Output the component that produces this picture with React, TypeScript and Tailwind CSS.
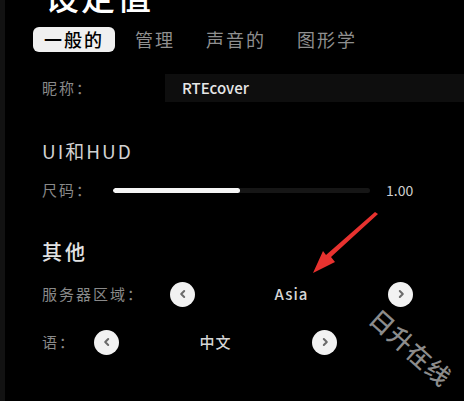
import React from 'react'

const font = { fontFamily: '"Noto Sans CJK SC", "Noto Sans", sans-serif' }

function RoundArrow({ dir }: { dir: 'left' | 'right' }) {
  return (
    <div className="flex h-[25px] w-[25px] shrink-0 items-center justify-center rounded-full bg-[#f2f2f2]">
      <svg width="10" height="10" viewBox="0 0 10 10">
        <path
          d={dir === 'left' ? 'M6.2 2 L3.2 5 L6.2 8' : 'M3.8 2 L6.8 5 L3.8 8'}
          fill="none"
          stroke="#6b6b6b"
          strokeWidth="2"
          strokeLinecap="round"
          strokeLinejoin="round"
        />
      </svg>
    </div>
  )
}

function Picker({ value }: { value: string }) {
  return (
    <div className="flex w-[243px] items-center justify-between">
      <RoundArrow dir="left" />
      <span className="text-[15px] font-medium tracking-[1px] text-[#d6d6d6]">{value}</span>
      <RoundArrow dir="right" />
    </div>
  )
}

export default function App() {
  const tabs = ['一般的', '管理', '声音的', '图形学']

  return (
    <div
      style={font}
      className="relative h-[401px] w-[464px] overflow-hidden border-l-[5px] border-[#121212] bg-black"
    >
      {/* cut-off title */}
      <div className="h-[16px] overflow-hidden pl-[40px]">
        <div className="-mt-[21px] text-[34px] font-medium leading-none tracking-[2px] text-white">
          设定值
        </div>
      </div>

      {/* tabs */}
      <div className="mt-[11px] flex h-[25px] items-center gap-[9px] pl-[28px]">
        {tabs.map((t, i) => (
          <div
            key={t}
            className={
              i === 0
                ? 'flex h-[25px] items-center rounded-[6px] bg-[#f0f0f0] px-[11px] text-[18px] font-medium tracking-[2px] text-black'
                : 'flex h-[25px] items-center px-[11px] text-[18px] tracking-[2px] text-[#8f8f8f]'
            }
          >
            {t}
          </div>
        ))}
      </div>

      {/* nickname */}
      <div className="mt-[22px] flex h-[28px] items-center pl-[37px]">
        <span className="w-[123px] text-[15px] tracking-[2px] text-[#8a8a8a]">昵称：</span>
        <div className="flex h-[28px] flex-1 items-center bg-[#0e0e0e] pl-[17px] text-[15px] font-medium text-[#e6e6e6]">
          RTEcover
        </div>
      </div>

      {/* UI and HUD */}
      <div className="mt-[37px] flex h-[24px] items-center pl-[37px] text-[19px] tracking-[2px] text-[#d2d2d2]">
        UI和HUD
      </div>

      <div className="mt-[17px] flex h-[20px] items-center pl-[37px]">
        <span className="w-[71px] text-[15px] tracking-[2px] text-[#8a8a8a]">尺码：</span>
        <div className="flex h-[5px] w-[257px] overflow-hidden rounded-full bg-[#161616]">
          <div className="h-full w-[127px] rounded-full bg-[#f5f5f5]" />
        </div>
        <span className="ml-[16px] text-[14px] text-[#cfcfcf]">1.00</span>
      </div>

      {/* other */}
      <div className="mt-[39px] flex h-[26px] items-center pl-[37px] text-[20px] font-medium tracking-[3px] text-[#e2e2e2]">
        其他
      </div>

      <div className="mt-[16px] flex h-[26px] items-center gap-[26px] pl-[37px]">
        <span className="text-[15px] tracking-[2px] text-[#8a8a8a]">服务器区域：</span>
        <Picker value="Asia" />
      </div>

      <div className="mt-[22px] flex h-[26px] items-center gap-[18px] pl-[37px]">
        <span className="text-[15px] tracking-[2px] text-[#8a8a8a]">语：</span>
        <Picker value="中文" />
      </div>

      {/* red annotation arrow */}
      <svg className="absolute left-0 top-0" width="464" height="401" viewBox="0 0 464 401">
        <path d="M373 214 L326 257 L330 262 L308 273 L318 251 L321 255 L370 212 Z" fill="#e8322f" />
      </svg>

      {/* watermark */}
      <div className="absolute left-[356px] top-[329px] rotate-[42deg] text-[24px] font-medium tracking-[1px] text-[#8c8c8c]">
        日升在线
      </div>
    </div>
  )
}
